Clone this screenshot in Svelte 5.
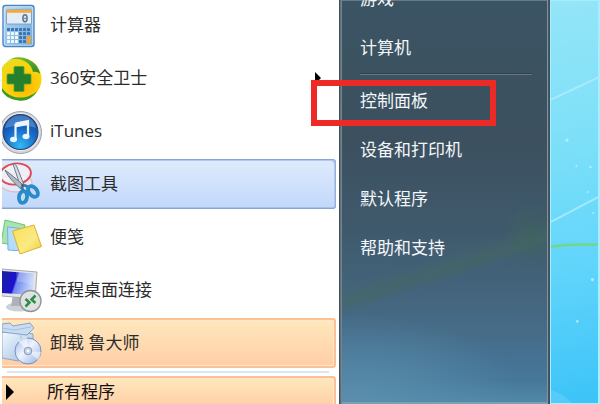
<script lang="ts">
  const programs = [
    { name: '计算器', icon: 'calculator' },
    { name: '360安全卫士', icon: 'shield', submenu: true },
    { name: 'iTunes', icon: 'itunes' },
    { name: '截图工具', icon: 'snip', state: 'selected' },
    { name: '便笺', icon: 'notes' },
    { name: '远程桌面连接', icon: 'remote' },
    { name: '卸载 鲁大师', icon: 'uninstall', state: 'fresh' },
  ];

  const places = [
    { name: '游戏' },
    { name: '计算机', divider: true },
    { name: '控制面板', marked: true },
    { name: '设备和打印机' },
    { name: '默认程序' },
    { name: '帮助和支持' },
  ];

  const keyCols = [5, 9, 13, 17, 21, 25];
  const keyRows = [28, 32, 36, 40];
</script>

<main class="screen">
  <section class="programs">
    {#each programs as program}
      <button class="program {program.state ?? ''}">
        <svg class="icon" viewBox="0 0 40 50" aria-hidden="true">
          {#if program.icon === 'calculator'}
            <defs>
              <linearGradient id="calc" x1="0" y1="0" x2="1" y2="1">
                <stop offset="0" stop-color="#b9dcf5" />
                <stop offset="1" stop-color="#6fa8dc" />
              </linearGradient>
            </defs>
            <rect x="1" y="5.5" width="31" height="41" rx="2.5" fill="url(#calc)" stroke="#4d83bd" stroke-width="1.4" />
            <rect x="2.3" y="6.8" width="28.4" height="38.4" rx="1.5" fill="none" stroke="#d8edfb" stroke-width=".8" />
            <rect x="4.5" y="10" width="25" height="14" rx="1" fill="#e4edf6" stroke="#6c93bd" stroke-width=".8" />
            <path d="M4.5 9.8h25v3h-25z" fill="#f5a93b" />
            <ellipse cx="23" cy="18.3" rx="2.1" ry="3.6" fill="none" stroke="#5b7694" stroke-width="1.5" />
            <path d="M21.5 18.3h3" stroke="#5b7694" />
            {#each keyRows as y, r}
              {#each keyCols as x, c}
                <rect {x} {y} width="3" height="3" rx=".4" fill={r === 0 || c > 2 ? '#3f75ad' : '#f4f9fd'} />
              {/each}
            {/each}
            <rect x="25" y="36" width="3.6" height="7.4" rx=".5" fill="#f6a51f" />
          {:else if program.icon === 'shield'}
            <defs>
              <radialGradient id="ball" cx=".6" cy=".65" r=".7">
                <stop offset="0" stop-color="#ffb400" />
                <stop offset=".6" stop-color="#fcd20c" />
                <stop offset="1" stop-color="#e7dc23" />
              </radialGradient>
              <linearGradient id="leaf" x1="0" y1="0" x2="1" y2="1">
                <stop offset="0" stop-color="#8cc92c" />
                <stop offset="1" stop-color="#25872b" />
              </linearGradient>
            </defs>
            <circle cx="18" cy="26" r="21.5" fill="url(#ball)" />
            <path d="M3 10C11 1 26 3 34 12c2 3 4 7 4 9-1-1-3-3-7-2-1-7-9-14-18-13C8 6 5 8 3 10z" fill="url(#leaf)" />
            <path d="M0 35c5 8 16 12 27 8 3-1 6-3 8-5-5 9-14 11-21 9C7 46 2 42 0 38z" fill="#389a2b" />
            <path d="M12 14.5q0-1 1-1h8q1 0 1 1V21h6q1 0 1 1v8q0 1-1 1h-6v6.500q0 1-1 1h-8q-1 0-1-1V31H6q-1 0-1-1v-8q0-1 1-1h6z" fill="#24802c" stroke="#58a526" stroke-width=".8" />
          {:else if program.icon === 'itunes'}
            <defs>
              <radialGradient id="tune" cx=".5" cy=".9" r=".9">
                <stop offset="0" stop-color="#35b7f5" />
                <stop offset=".55" stop-color="#1668c6" />
                <stop offset="1" stop-color="#123f92" />
              </radialGradient>
            </defs>
            <circle cx="18.500" cy="26.500" r="21" fill="#d3d6db" stroke="#9ba0a8" />
            <circle cx="18.500" cy="26" r="19" fill="#eef0f2" />
            <circle cx="18.500" cy="26" r="17.500" fill="url(#tune)" stroke="#28456f" stroke-width="1.2" />
            <path d="M3 22C6 5 31 5 34 22c-8-3-20-3-31 0z" fill="#7cb8ec" opacity=".45" />
            <path d="M13.500 17.500 26 15v15" fill="none" stroke="#e8f5ff" stroke-width="2.200" />
            <path d="M13.500 18v15.500" stroke="#e8f5ff" stroke-width="2.200" />
            <path d="m13 17.500 13.500-2.500v4L13 21.500z" fill="#e8f5ff" />
            <ellipse cx="11.500" cy="33.500" rx="3.500" ry="2.700" fill="#e8f5ff" />
            <ellipse cx="24" cy="30.500" rx="3.500" ry="2.700" fill="#e8f5ff" />
          {:else if program.icon === 'snip'}
            <ellipse cx="14" cy="24" rx="16" ry="9" fill="#fff" fill-opacity=".35" stroke="#e8b9c5" stroke-width="1.3" />
            <ellipse cx="13.500" cy="15" rx="15.500" ry="10.500" fill="#f5f1f6" fill-opacity=".8" stroke="#e04a50" stroke-width="1.900" transform="rotate(-8 13.500 15)" />
            <path d="M11 5c2-.5 3 1 4 3l7 18-3 3z" fill="#d5dce3" stroke="#66727e" stroke-width=".9" />
            <path d="M3 11c5 4 12 9 19 16l-3 3C13 25 6 18 3 11z" fill="#aeb9c3" stroke="#5c6873" stroke-width=".9" />
            <path d="m20 27 1 7M22 26l6 3" stroke="#3b7ba8" stroke-width="3" />
            <ellipse cx="21" cy="38" rx="4" ry="6" fill="#c4dcf0" stroke="#2b8bca" stroke-width="3.800" transform="rotate(8 21 38)" />
            <ellipse cx="31" cy="32.500" rx="4" ry="6" fill="#c4dcf0" stroke="#2b8bca" stroke-width="3.800" transform="rotate(-40 31 32.500)" />
            <circle cx="20.500" cy="26" r="1.200" fill="#46515b" />
          {:else if program.icon === 'notes'}
            <defs>
              <linearGradient id="note" x1="0" y1="0" x2="1" y2="1">
                <stop offset="0" stop-color="#f7df54" />
                <stop offset=".6" stop-color="#fbea84" />
                <stop offset="1" stop-color="#edca3b" />
              </linearGradient>
            </defs>
            <path d="m3 8 20 5-4 21-20-3z" fill="#a9e4ad" stroke="#63c778" />
            <path d="M5.500 15 24 17l-2 22-16-1z" fill="#b4dcfb" stroke="#74b1e6" />
            <path d="M10.500 19 32 13l7.500 21.500L18 42z" fill="url(#note)" stroke="#d9b42f" />
          {:else if program.icon === 'remote'}
            <defs>
              <linearGradient id="desk" x1="0" y1="0" x2="1" y2=".25">
                <stop offset="0" stop-color="#1a1f9c" />
                <stop offset=".48" stop-color="#1d12cf" />
                <stop offset=".54" stop-color="#6c88ec" />
                <stop offset="1" stop-color="#c4d4fb" />
              </linearGradient>
            </defs>
            <ellipse cx="17" cy="42" rx="13" ry="4.500" fill="#cdd0d4" />
            <path d="M11 30h12l2 11H9z" fill="#aeb2b8" />
            <path d="M0 4l35 3-2 27-33-3z" fill="#e3e4e6" stroke="#a6a9ad" />
            <path d="M0 6l32 2.500-2 21.500-30-2z" fill="url(#desk)" />
            <path d="M14 7l18 1.500-1.500 12C25 17 18 16 15 17z" fill="#fff" opacity=".2" />
            <circle cx="28.500" cy="36" r="10.500" fill="#dfe2e2" stroke="#8e9495" stroke-width="1.300" />
            <path d="m23.500 34 4 3.500-4 4M33.500 30.500l-4 4 4 3.500" fill="none" stroke="#2c8d43" stroke-width="2.500" />
          {:else}
            <defs>
              <linearGradient id="box" x1="0" y1="0" x2="1" y2="1">
                <stop offset="0" stop-color="#f5faff" />
                <stop offset="1" stop-color="#9abbe0" />
              </linearGradient>
              <linearGradient id="disc" x1="0" y1="0" x2="1" y2="1">
                <stop offset="0" stop-color="#9eb6e8" />
                <stop offset=".45" stop-color="#eef4ff" />
                <stop offset="1" stop-color="#91addf" />
              </linearGradient>
            </defs>
            <path d="M0 14h20l11 2v22L16 43 0 40z" fill="url(#box)" stroke="#7a9cc5" stroke-width=".8" />
            <path d="M0 6 8 5l3 3 17-3 4 5-7 7-25-3z" fill="#c8ddf2" stroke="#6f94bf" stroke-width=".8" />
            <path d="m0 10 12 2 17-3M19 16v25" fill="none" stroke="#a4bfdd" />
            <circle cx="26" cy="33" r="13" fill="url(#disc)" stroke="#788fbe" />
            <path d="M26 33 16 23q5-4 9-4zM26 33l10 9q3-4 3-8z" fill="#fff" opacity=".55" />
            <circle cx="26" cy="33" r="3.800" fill="#c9d4e8" stroke="#8398bd" />
            <circle cx="26" cy="33" r="1.300" fill="#fff" />
          {/if}
        </svg>
        <span class="name">{program.name}</span>
        {#if program.submenu}
          <svg class="submenu" viewBox="0 0 6 12" aria-hidden="true"><path d="M0 0l6 6-6 6z" /></svg>
        {/if}
      </button>
    {/each}
    <hr class="rule" />
    <button class="program fresh all">
      <svg class="arrow" viewBox="0 0 10 18" aria-hidden="true"><path d="M1 1l8 8-8 8z" /></svg>
      <span>所有程序</span>
    </button>
  </section>

  <nav class="places">
    {#each places as place}
      <a href="#{place.name}" class="place" class:marked={place.marked}>{place.name}</a>
      {#if place.divider}
        <hr class="divider" />
      {/if}
    {/each}
  </nav>

  <aside class="desktop">
    <svg viewBox="0 0 50 404" preserveAspectRatio="none" aria-hidden="true">
      <path d="M0 99 50 77M0 222l50-25" stroke="#b5efff" stroke-width="2" opacity=".75" />
      <path d="M0 247q20-3 50-2" fill="none" stroke="#70d886" stroke-width="2.500" />
      <path d="M0 391q12 3 22 13H0z" fill="#8bdcfb" opacity=".3" />
      <g fill="#c5f4ff" opacity=".8">
        <circle cx="17" cy="140" r="1.500" />
        <circle cx="27" cy="166" r="1" />
        <circle cx="42" cy="167" r="1.200" />
        <circle cx="39" cy="192" r="1" />
        <circle cx="45" cy="213" r="1" />
        <circle cx="44" cy="280" r="1.600" />
        <circle cx="28" cy="322" r="1.300" />
      </g>
    </svg>
  </aside>
</main>

<style>
  :global(body) {
    margin: 0;
    overflow: hidden;
  }

  .screen {
    display: grid;
    grid-template-columns: 339fr 211fr 50fr;
    height: 100vh;
    overflow: hidden;
    background: #fff;
    font-family: 'Open Sans', 'Noto Sans CJK SC', sans-serif;
    font-size: 17px;
    line-height: 24px;
  }

  .programs {
    display: flex;
    flex-direction: column;
    gap: 3px;
    min-width: 0;
    padding: 0 3px 0 2px;
  }

  .program {
    display: flex;
    flex: none;
    align-items: center;
    gap: 8px;
    box-sizing: border-box;
    height: 50px;
    padding: 0;
    border: 0 solid transparent;
    border-radius: 0 4px 4px 0;
    background: none;
    color: #2b2b2b;
    font: inherit;
    text-align: left;
  }

  .icon {
    flex: none;
    width: 40px;
    height: 50px;
  }

  .name {
    flex: 1;
  }

  .submenu {
    width: 6px;
    height: 12px;
    margin-right: 15px;
  }

  .selected {
    background: linear-gradient(#dfebfd, #c1d8fb);
    box-shadow: inset -1px 0 #94afdb, inset 0 1px #86a4d4, inset 0 -1px #86a4d4, inset -2px 2px #b4c9ea, inset 0 -2px #a9c1e6;
  }

  .fresh {
    background: linear-gradient(#ffe9bd, #ffcda6);
    box-shadow: inset -2px 0 #fdc095, inset 0 2px #fdc095, inset 0 -2px #fdc095, inset -3px 3px #ffe8d0, inset 0 -3px #ffe8d0;
  }

  .rule {
    flex: none;
    align-self: stretch;
    height: 2px;
    margin: 0 7px 0 5px;
    border: 0;
    background: #d9e6f5;
  }

  .all {
    gap: 32px;
    height: 32px;
    padding-left: 3px;
    color: #111;
  }

  .arrow {
    width: 10px;
    height: 18px;
  }

  .places {
    display: flex;
    flex-direction: column;
    box-sizing: border-box;
    height: 100vh;
    min-width: 0;
    padding: 0 17px 0 20px;
    border: solid #40505c;
    border-width: 0 1px;
    box-shadow: inset 1px 0 #5f7079, inset 2px 0 #74858e, inset -1px 0 #41545f, inset -2px 0 #83949c, inset 0 1px #687b86, inset 0 -2px #7ba0b6;
    background:
      radial-gradient(ellipse 26px 34px at 91% 58%, #3e655a99 0, transparent 100%),
      radial-gradient(ellipse 160px 90px at 10% 100%, #5a8eac 0, transparent 100%),
      linear-gradient(162deg, transparent 61%, #45676599 64%, #45676599 65%, transparent 67%),
      linear-gradient(#3b5463, #3c505f 35%, #3f5a6d 58%, #456780 76%, #46779a 94%, #5289a9);
  }

  .place {
    position: relative;
    flex: none;
    height: 49px;
    color: #f3f7fa;
    line-height: 49px;
    text-decoration: none;
    white-space: nowrap;
  }

  .place:first-child {
    margin-top: -26px;
  }

  .divider {
    flex: none;
    width: 100%;
    height: 1px;
    margin: 2px 0 1px;
    border: 0;
    background: #667783;
    box-shadow: 0 -1px #2f424e;
  }

  .marked::after {
    content: '';
    position: absolute;
    inset: 4px 36px -1px -49px;
    border: 6px solid #ee2a26;
  }

  .desktop {
    box-sizing: border-box;
    min-width: 0;
    height: 100vh;
    border: solid #a6eefd;
    border-width: 1px 2px 1px 1px;
    background: linear-gradient(170deg, #94e5f7, #7de0f8 35%, #62d5fb 65%, #3cc3f8);
  }

  .desktop svg {
    display: block;
    width: 100%;
    height: 100%;
  }
</style>
